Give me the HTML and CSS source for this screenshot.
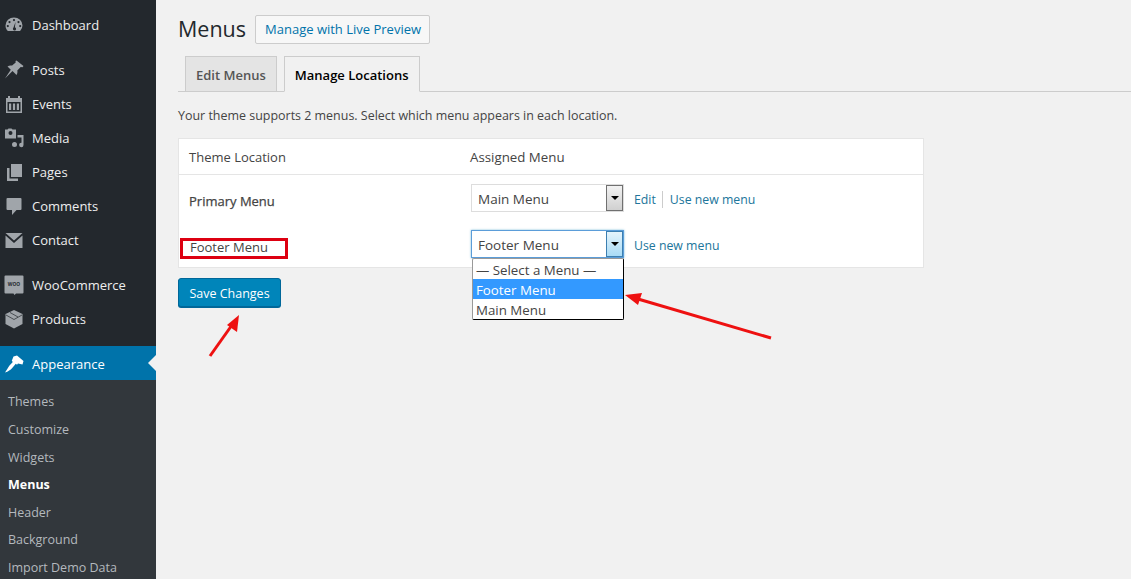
FILE: index.html
```html
<!DOCTYPE html>
<html lang="en">
<head>
<meta charset="utf-8">
<title>Menus</title>
<link rel="stylesheet" href="styles.css">
</head>
<body>
<div class="app">
  <nav class="side">
    <div class="item first"><svg class="ico" viewBox="0 0 20 20"><path fill="#a0a5aa" fill-rule="evenodd" d="M10 2.500a8.500 8 0 0 0-8.500 8c0 2.300.9 4.200 2.400 5.500h12.200a8 8 0 0 0 2.400-5.500a8.500 8 0 0 0-8.500-8zM10 4a1.100 1.100 0 1 1 0 2.200A1.100 1.100 0 0 1 10 4zM5.500 6a1.100 1.100 0 1 1 0 2.200 1.100 1.100 0 0 1 0-2.200zM14.500 6a1.100 1.100 0 1 1 0 2.200 1.100 1.100 0 0 1 0-2.200zM3.800 10a1.100 1.100 0 1 1 0 2.200 1.100 1.100 0 0 1 0-2.200zM16.200 10a1.100 1.100 0 1 1 0 2.200 1.100 1.100 0 0 1 0-2.200zM11.500 7l-.6 5.300a1.600 1.600 0 1 1-2 1.500c0-.4.200-.8.500-1.100z"/></svg><span>Dashboard</span></div>
    <div class="item gap"><svg class="ico" viewBox="0 0 20 20"><path fill="#a0a5aa" d="M11.500 1l1-.5 7 5.500-1 1.300-1.800-.4-3.400 3.600c.4 1.600.1 3.200-.8 4.500L8.500 11 1 18.500 6.800 9.700 3.500 6.500c1.300-1 3-1.300 4.600-.9l3.600-3.200z"/></svg><span>Posts</span></div>
    <div class="item"><svg class="ico" viewBox="0 0 20 20"><path fill="#a0a5aa" fill-rule="evenodd" d="M2 4h2V2h2v2h8V2h2v2h2v15H2zM3.500 8v9.500h13V8zM5 9.500h2.200V16H5zM8.900 9.500h2.200V16H8.900zM12.800 9.500H15V16h-2.200z"/></svg><span>Events</span></div>
    <div class="item"><svg class="ico" viewBox="0 0 20 20"><path fill="#a0a5aa" fill-rule="evenodd" d="M1 1.500h2.500l1-1h3l1 1H12v9H1zM6.500 3a2 2 0 1 0 0 4 2 2 0 0 0 0-4zM13.500 7H19.500v10a2.200 2.200 0 1 1-2-2.200V9.500h-4zM10.500 14a2.500 2.500 0 1 1 0 5 2.500 2.500 0 0 1 0-5z"/></svg><span>Media</span></div>
    <div class="item"><svg class="ico" viewBox="0 0 20 20"><path fill="#a0a5aa" d="M7 2h11v13H7zM3 6h2.500v10.500H14V19H3z"/></svg><span>Pages</span></div>
    <div class="item"><svg class="ico" viewBox="0 0 20 20"><path fill="#a0a5aa" d="M3.500 2h13a1 1 0 0 1 1 1v10a1 1 0 0 1-1 1h-4l-4.500 5v-5H3.500a1 1 0 0 1-1-1V3a1 1 0 0 1 1-1z"/></svg><span>Comments</span></div>
    <div class="item"><svg class="ico" viewBox="0 0 20 20"><path fill="#a0a5aa" d="M1.500 3h17L10 10.500zM1.500 5.500l8.500 7.500 8.500-7.500V18h-17z"/></svg><span>Contact</span></div>
    <div class="item gap"><svg class="ico" viewBox="0 0 20 20"><path fill="#a0a5aa" d="M1.500.5h17a1 1 0 0 1 1 1v16a1 1 0 0 1-1 1h-6.500l-1.500 1.500-1-1.500H1.500a1 1 0 0 1-1-1v-16a1 1 0 0 1 1-1z"/><text class="woo" x="10" y="11" text-anchor="middle">WOO</text></svg><span>WooCommerce</span></div>
    <div class="item"><svg class="ico" viewBox="0 0 20 20"><path fill="#a0a5aa" d="M10 1l8.500 4v10L10 19.500 1.500 15V5z"/><path fill="none" stroke="#23282d" stroke-width=".7" d="M2 6l8 4.500L18 6M6 3.500l8 4.500"/></svg><span>Products</span></div>
    <div class="item current"><svg class="ico" viewBox="0 0 20 20"><path fill="#fff" d="M9.500 2.500L13 1.500l6.500 5.500-1 3.500-4.500-1-1 1.200-1.200-1-3.800 4.500c-1.300 1.500-3.800 3.300-7 4.300 1.200-1.700 3-4.600 4.500-7l3.300-3.500-1-1.200z"/></svg><span>Appearance</span><i class="notch"></i></div>
    <ul class="sub">
      <li>Themes</li>
      <li>Customize</li>
      <li>Widgets</li>
      <li class="on">Menus</li>
      <li>Header</li>
      <li>Background</li>
      <li>Import Demo Data</li>
    </ul>
  </nav>
  <main class="main">
    <header class="head">
      <h1>Menus</h1>
      <a class="live">Manage with Live Preview</a>
    </header>
    <div class="tabs">
      <a class="tab">Edit Menus</a>
      <a class="tab active">Manage Locations</a>
    </div>
    <p class="intro">Your theme supports 2 menus. Select which menu appears in each location.</p>
    <section class="card">
      <div class="row top">
        <div class="col1">Theme Location</div>
        <div class="assigned">Assigned Menu</div>
      </div>
      <div class="row r1">
        <div class="col1 primary">Primary Menu</div>
        <div class="sel"><span>Main Menu</span><b class="btn"><i></i></b></div>
        <a class="lnk">Edit</a><a class="lnk sep">Use new menu</a>
      </div>
      <div class="row r2">
        <div class="col1 footer">Footer Menu</div>
        <div class="sel focus"><span>Footer Menu</span><b class="btn"><i></i></b>
          <ul class="drop">
            <li>— Select a Menu —</li>
            <li class="hl">Footer Menu</li>
            <li>Main Menu</li>
          </ul>
        </div>
        <a class="lnk">Use new menu</a>
      </div>
    </section>
    <a class="save">Save Changes</a>
  </main>
</div>
<div class="redbox"></div>
<svg class="marks" viewBox="0 0 1131 579">
  <path d="M771 338L638 299" stroke="#ee1111" stroke-width="3" fill="none"/>
  <path d="M625 295l17-2-4 12z" fill="#ee1111"/>
  <path d="M210 356L232 325" stroke="#ee1111" stroke-width="3" fill="none"/>
  <path d="M239 315l-2 17-10-7z" fill="#ee1111"/>
</svg>
</body>
</html>
```
FILE: styles.css
```css
* { box-sizing: border-box; }
html, body { margin: 0; height: 579px; overflow: hidden; }
body { background: #f1f1f1; font-family: "Open Sans", sans-serif; font-size: 13px; color: #444; position: relative; }
.app { display: flex; height: 579px; }
.side { width: 156px; flex: none; background: #23282d; color: #eee; padding-top: 8px; }
.item { height: 34px; display: flex; align-items: center; gap: 8px; padding-left: 4px; position: relative; font-size: 13px; }
.item.gap { margin-top: 11px; }
.ico { width: 20px; height: 20px; flex: none; }
.woo { font-size: 4.800px; font-weight: 700; fill: #23282d; font-family: "Open Sans", sans-serif; }
.current { background: #0073aa; color: #fff; margin-top: 10px; padding-top: 1px; }
.notch { position: absolute; right: 0; top: 9px; border: 8px solid transparent; border-right-color: #f1f1f1; border-left-width: 0; }
.sub { list-style: none; margin: 0; padding: 8.400px 0 0 8px; background: #32373c; color: #b4b9be; font-size: 12.500px; height: 199px; }
.sub li { height: 27.600px; line-height: 27.600px; }
.sub .on { color: #fff; font-weight: 700; }
.main { flex: 1; padding: 0 0 0 22px; min-width: 0; }
.head { display: flex; align-items: center; gap: 9px; height: 43px; padding-top: 15px; }
h1 { margin: 0; font-size: 21.500px; font-weight: 400; color: #23282d; line-height: 30px; }
.live { height: 29px; line-height: 27px; padding: 0 8px 0 9px; border: 1px solid #ccc; border-radius: 2px; background: #f7f7f7; color: #0073aa; font-size: 13px; font-weight: 500; }
.tabs { display: flex; margin: 13px 0 0; padding-left: 7px; gap: 7px; height: 36px; border-bottom: 1px solid #ccc; }
.tab { height: 36px; line-height: 36px; padding: 0 10px; border: 1px solid #ccc; background: #e4e4e4; color: #555; font-weight: 600; }
.tab.active { background: #f1f1f1; color: #000; border-bottom-color: #f1f1f1; }
.intro { margin: 15px 0 0; font-size: 12.460px; line-height: 18px; }
.card { width: 746px; height: 130px; margin-top: 13px; background: #fff; border: 1px solid #e5e5e5; }
.row { display: flex; align-items: center; }
.top { height: 36px; border-bottom: 1px solid #e5e5e5; }
.col1 { width: 292px; padding-left: 10px; flex: none; }
.assigned { font-size: 13.300px; margin-left: -1px; }
.primary { font-weight: 500; margin-top: 4px; -webkit-text-stroke: .25px #444; }
.footer { margin-top: 4px; padding-left: 11px; }
.r1 { height: 48px; }
.r2 { height: 44px; }
.sel { width: 153px; height: 28px; flex: none; border: 1px solid #ddd; display: flex; align-items: center; justify-content: space-between; padding-left: 6px; position: relative; font-size: 13.500px; background: #fff; margin-right: 10px; }
.sel > span { padding-top: 1px; }
.r1 .sel > span { padding-top: 3px; }
.r1 .sel { margin-top: -3px; }
.r2 .sel { margin-top: -2px; }
.btn { width: 17px; height: 26px; border: 1px solid #707070; background: linear-gradient(#f2f2f2, #d0d0d0); display: flex; align-items: center; justify-content: center; }
.btn i { border: 4px solid transparent; border-top: 4px solid #000; border-bottom-width: 0; }
.focus { border-color: #5b9dd9; box-shadow: 0 0 2px rgba(30,140,190,.6); }
.focus .btn { border-color: #3c7fb1; background: linear-gradient(#e5f4fc, #a9dbf6); }
.drop { list-style: none; position: absolute; left: 0; top: 27px; width: 152px; margin: 0; padding: 0; background: #fff; border: 1px solid #000; border-top-color: #999; border-left-color: #999; border-radius: 2px; z-index: 2; font-size: 13.300px; color: #444; }
.drop li { height: 20px; line-height: 22px; padding-left: 3px; }
.drop .hl { background: #3399ff; color: #fff; }
.lnk { color: #21759b; font-size: 12.300px; }
.sep { margin-left: 6px; padding-left: 7px; border-left: 1px solid #ccc; }
.save { display: block; width: 103px; height: 29px; margin-top: 10px; line-height: 30px; text-align: center; color: #fff; background: #0085ba; border: 1px solid #006799; border-radius: 3px; box-shadow: 0 1px 0 #006799; font-size: 12.500px; }
.redbox { position: absolute; left: 180px; top: 238px; width: 108px; height: 21px; border: 3px solid #dd0011; }
.marks { position: absolute; left: 0; top: 0; width: 1131px; height: 579px; pointer-events: none; z-index: 3; }
```
